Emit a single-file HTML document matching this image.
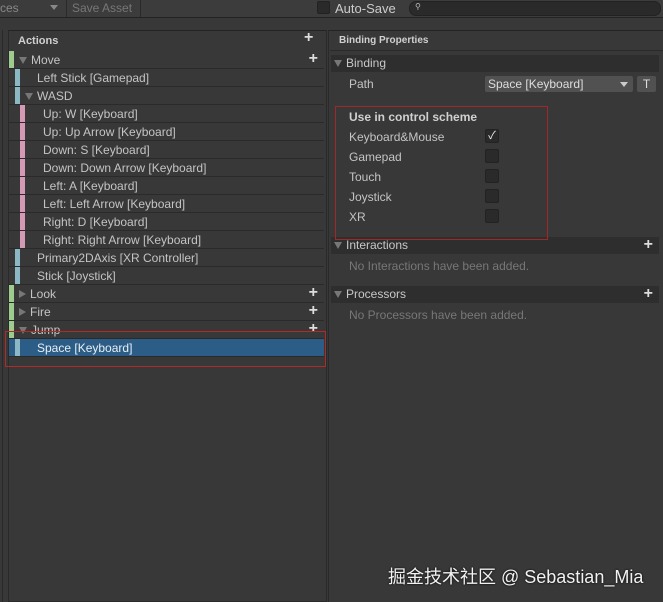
<!DOCTYPE html>
<html><head><meta charset="utf-8"><style>
*{margin:0;padding:0;box-sizing:border-box}
body{width:663px;height:602px;background:#383838;font-family:"Liberation Sans","Noto Sans CJK SC",sans-serif;font-size:12px;color:#c4c4c4;position:relative;overflow:hidden}
.a{position:absolute}
.row{position:absolute;left:9px;width:315px;height:18px;border-bottom:1px solid #2a2a2a;line-height:18px;white-space:nowrap}
.bar{position:absolute;top:0;width:5px;height:17px}
.g{background:#9ecb8e}.b{background:#8bb8c4}.p{background:#d49ab5}
.plus{position:absolute;right:6px;top:-1px;font-size:16px;color:#ddd;font-weight:bold}
.tri{display:inline-block;width:0;height:0;border-left:4px solid transparent;border-right:4px solid transparent;border-top:7px solid #777;margin-right:4px}
.trir{display:inline-block;width:0;height:0;border-top:4px solid transparent;border-bottom:4px solid transparent;border-left:7px solid #777;margin-right:4px}
.hdr{position:absolute;left:331px;width:328px;height:17px;background:#2e2e2e;line-height:17px;color:#c8c8c8}
.cb{position:absolute;left:485px;width:14px;height:14px;background:#2a2a2a;border:1px solid #222;border-radius:2px}
.lbl{position:absolute;left:349px}
.red{position:absolute;z-index:5}
</style></head><body>
<div class="a" style="left:0;top:0;width:663px;height:18px;background:#3c3c3c;border-bottom:1px solid #232323"></div>
<div class="a" style="left:0;top:1px;color:#888;font-size:12px">ces</div>
<div class="a" style="left:50px;top:5px;border-left:4px solid transparent;border-right:4px solid transparent;border-top:5px solid #888"></div>
<div class="a" style="left:66px;top:0;width:75px;height:17px;border-left:1px solid #2a2a2a;border-right:1px solid #2a2a2a;color:#777;padding-left:5px;line-height:17px">Save Asset</div>
<div class="a" style="left:317px;top:1px;width:13px;height:13px;background:#2a2a2a;border:1px solid #222;border-radius:2px"></div>
<div class="a" style="left:335px;top:1px;color:#ccc;font-size:13px">Auto-Save</div>
<div class="a" style="left:409px;top:1px;width:252px;height:15px;background:#2a2a2a;border-radius:7px;border:1px solid #222;font-size:8px;color:#bbb;padding-left:5px">&#9906;</div>

<div class="a" style="left:2px;top:30px;width:1px;height:572px;background:#2a2a2a"></div>
<div class="a" style="left:8px;top:30px;width:319px;height:572px;border:1px solid #2a2a2a;border-top:1px solid #232323;background:#383838"></div>
<div class="a" style="left:18px;top:35px;font-size:11px;font-weight:bold;color:#d0d0d0">Actions</div>
<div class="a" style="left:304px;top:29px;font-size:16px;font-weight:bold;color:#ddd">+</div>

<div class="row" style="top:51px"><div class="bar g" style="left:0"></div><span style="margin-left:10px"><span class="tri"></span>Move</span><span class="plus">+</span></div>
<div class="row" style="top:69px"><div class="bar b" style="left:6px"></div><span style="margin-left:28px">Left Stick [Gamepad]</span></div>
<div class="row" style="top:87px"><div class="bar b" style="left:6px"></div><span style="margin-left:16px"><span class="tri"></span>WASD</span></div>
<div class="row" style="top:105px"><div class="bar p" style="left:11px"></div><span style="margin-left:34px">Up: W [Keyboard]</span></div>
<div class="row" style="top:123px"><div class="bar p" style="left:11px"></div><span style="margin-left:34px">Up: Up Arrow [Keyboard]</span></div>
<div class="row" style="top:141px"><div class="bar p" style="left:11px"></div><span style="margin-left:34px">Down: S [Keyboard]</span></div>
<div class="row" style="top:159px"><div class="bar p" style="left:11px"></div><span style="margin-left:34px">Down: Down Arrow [Keyboard]</span></div>
<div class="row" style="top:177px"><div class="bar p" style="left:11px"></div><span style="margin-left:34px">Left: A [Keyboard]</span></div>
<div class="row" style="top:195px"><div class="bar p" style="left:11px"></div><span style="margin-left:34px">Left: Left Arrow [Keyboard]</span></div>
<div class="row" style="top:213px"><div class="bar p" style="left:11px"></div><span style="margin-left:34px">Right: D [Keyboard]</span></div>
<div class="row" style="top:231px"><div class="bar p" style="left:11px"></div><span style="margin-left:34px">Right: Right Arrow [Keyboard]</span></div>
<div class="row" style="top:249px"><div class="bar b" style="left:6px"></div><span style="margin-left:28px">Primary2DAxis [XR Controller]</span></div>
<div class="row" style="top:267px"><div class="bar b" style="left:6px"></div><span style="margin-left:28px">Stick [Joystick]</span></div>
<div class="row" style="top:285px"><div class="bar g" style="left:0"></div><span style="margin-left:10px"><span class="trir"></span>Look</span><span class="plus">+</span></div>
<div class="row" style="top:303px"><div class="bar g" style="left:0"></div><span style="margin-left:10px"><span class="trir"></span>Fire</span><span class="plus">+</span></div>
<div class="row" style="top:321px"><div class="bar g" style="left:0"></div><span style="margin-left:10px"><span class="tri"></span>Jump</span><span class="plus">+</span></div>
<div class="row" style="top:339px;background:#2c5d87;color:#e8eef4"><div class="bar b" style="left:6px"></div><span style="margin-left:28px">Space [Keyboard]</span></div>
<div class="red" style="left:5px;top:331px;width:321px;height:36px;border:1px solid #b02a2a"></div>

<div class="a" style="left:328px;top:30px;width:335px;height:572px;border-left:1px solid #2a2a2a;border-top:1px solid #232323"></div>
<div class="a" style="left:339px;top:35px;font-size:10px;font-weight:bold;color:#d0d0d0">Binding Properties</div>
<div class="a" style="left:330px;top:50px;width:333px;height:1px;background:#2a2a2a"></div>
<div class="hdr" style="top:55px"><span style="margin-left:3px"><span class="tri"></span>Binding</span></div>
<div class="lbl" style="top:77px">Path</div>
<div class="a" style="left:485px;top:76px;width:148px;height:16px;background:#515151;border-radius:2px;color:#ddd;padding-left:3px;line-height:16px">Space [Keyboard]<span style="position:absolute;right:5px;top:6px;border-left:4px solid transparent;border-right:4px solid transparent;border-top:5px solid #ccc"></span></div>
<div class="a" style="left:637px;top:76px;width:19px;height:16px;background:#515151;border-radius:2px;color:#ddd;text-align:center;line-height:16px">T</div>
<div class="red" style="left:335px;top:106px;width:213px;height:134px;border:1px solid #a02828"></div>
<div class="lbl" style="top:110px;font-weight:bold;color:#d0d0d0">Use in control scheme</div>
<div class="lbl" style="top:130px">Keyboard&amp;Mouse</div>
<div class="lbl" style="top:150px">Gamepad</div>
<div class="lbl" style="top:170px">Touch</div>
<div class="lbl" style="top:190px">Joystick</div>
<div class="lbl" style="top:210px">XR</div>
<div class="cb" style="top:129px;color:#eee;font-size:11px;line-height:12px;text-align:center">&#10003;</div>
<div class="cb" style="top:149px"></div>
<div class="cb" style="top:169px"></div>
<div class="cb" style="top:189px"></div>
<div class="cb" style="top:209px"></div>
<div class="hdr" style="top:237px"><span style="margin-left:3px"><span class="tri"></span>Interactions</span><span style="position:absolute;right:6px;top:-1px;font-size:16px;font-weight:bold;color:#ddd">+</span></div>
<div class="lbl" style="top:259px;color:#777">No Interactions have been added.</div>
<div class="hdr" style="top:286px"><span style="margin-left:3px"><span class="tri"></span>Processors</span><span style="position:absolute;right:6px;top:-1px;font-size:16px;font-weight:bold;color:#ddd">+</span></div>
<div class="lbl" style="top:308px;color:#777">No Processors have been added.</div>

<div class="a" style="left:388px;top:563px;font-size:18px;color:#f2f2f2;text-shadow:0 0 2px #000;white-space:nowrap">掘金技术社区 @ Sebastian_Mia</div>
</body></html>
